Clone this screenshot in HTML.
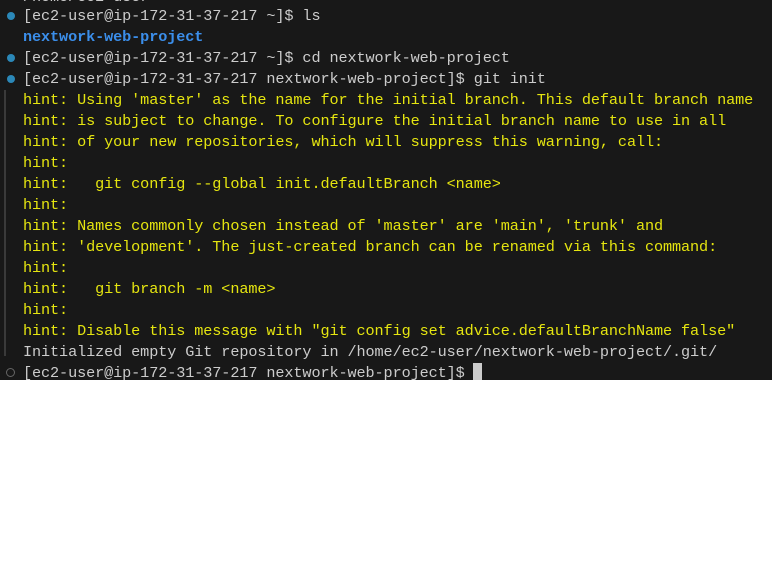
<!DOCTYPE html>
<html><head><style>
body{margin:0;width:772px;height:579px;background:#fff;overflow:hidden}
#t{position:absolute;left:0;top:0;width:772px;height:380px;background:#181818;overflow:hidden}
.l{position:absolute;left:23px;height:21px;line-height:21px;font-family:"Liberation Mono",monospace;font-size:15.2px;letter-spacing:-0.1px;color:#cccccc;white-space:pre}
.y{color:#e5e510}
.b{color:#3b8eea;font-weight:bold}
.d{position:absolute;left:7px;width:8px;height:8px;border-radius:50%;background:#2b88b8}
.o{position:absolute;left:6px;width:7px;height:7px;border-radius:50%;border:1.5px solid #666}
.bar{position:absolute;left:4px;top:90px;width:2px;height:266px;background:#3a3a3a}
</style></head><body><div id="t">
<div class="l" style="top:-13px">/home/ec2-user</div>
<div class="d" style="top:12px"></div>
<div class="l" style="top:6px">[ec2-user@ip-172-31-37-217 ~]$ ls</div>
<div class="l b" style="top:27px">nextwork-web-project</div>
<div class="d" style="top:54px"></div>
<div class="l" style="top:48px">[ec2-user@ip-172-31-37-217 ~]$ cd nextwork-web-project</div>
<div class="d" style="top:75px"></div>
<div class="l" style="top:69px">[ec2-user@ip-172-31-37-217 nextwork-web-project]$ git init</div>
<div class="bar"></div>
<div class="l y" style="top:90px">hint: Using 'master' as the name for the initial branch. This default branch name</div>
<div class="l y" style="top:111px">hint: is subject to change. To configure the initial branch name to use in all</div>
<div class="l y" style="top:132px">hint: of your new repositories, which will suppress this warning, call:</div>
<div class="l y" style="top:153px">hint:</div>
<div class="l y" style="top:174px">hint:   git config --global init.defaultBranch &lt;name&gt;</div>
<div class="l y" style="top:195px">hint:</div>
<div class="l y" style="top:216px">hint: Names commonly chosen instead of 'master' are 'main', 'trunk' and</div>
<div class="l y" style="top:237px">hint: 'development'. The just-created branch can be renamed via this command:</div>
<div class="l y" style="top:258px">hint:</div>
<div class="l y" style="top:279px">hint:   git branch -m &lt;name&gt;</div>
<div class="l y" style="top:300px">hint:</div>
<div class="l y" style="top:321px">hint: Disable this message with "git config set advice.defaultBranchName false"</div>
<div class="l" style="top:342px">Initialized empty Git repository in /home/ec2-user/nextwork-web-project/.git/</div>
<div class="o" style="top:368px"></div>
<div class="l" style="top:363px">[ec2-user@ip-172-31-37-217 nextwork-web-project]$ </div>
<div style="position:absolute;left:473px;top:363px;width:9px;height:17px;background:#cccccc"></div>
</div></body></html>
